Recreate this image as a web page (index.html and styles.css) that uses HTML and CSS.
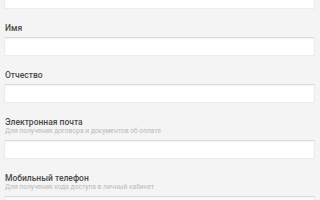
FILE: index.html
```html
<!DOCTYPE html>
<html lang="ru">
<head>
<meta charset="utf-8">
<link rel="stylesheet" href="styles.css">
</head>
<body>
<div class="form">
  <div class="field field-cut">
    <div class="input"></div>
  </div>
  <div class="field">
    <div class="label">Имя</div>
    <div class="input"></div>
  </div>
  <div class="field">
    <div class="label">Отчество</div>
    <div class="input"></div>
  </div>
  <div class="field">
    <div class="label">Электронная почта</div>
    <div class="hint">Для получения договора и документов об оплате</div>
    <div class="input"></div>
  </div>
  <div class="field">
    <div class="label">Мобильный телефон</div>
    <div class="hint">Для получения кода доступа в личный кабинет</div>
    <div class="input"><span class="placeholder">+7 (999) 999-99-99</span></div>
  </div>
</div>
</body>
</html>
```
FILE: styles.css
```css
html, body {
  margin: 0;
  padding: 0;
  background: #f4f4f4;
  font-family: Roboto, "Liberation Sans", Arial, sans-serif;
  overflow: hidden;
}
.form {
  display: flex;
  flex-direction: column;
  gap: 14px;
  padding: 0 5px 0 4px;
}
.field {
  display: flex;
  flex-direction: column;
}
.field-cut {
  margin-top: -14px;
}
.label {
  font-size: 8.5px;
  line-height: 10px;
  font-weight: 500;
  color: #4a4a4a;
  padding-left: 1px;
}
.hint {
  font-size: 6.7px;
  line-height: 8px;
  color: #bababa;
  padding-left: 1px;
  margin-bottom: 1px;
}
.input {
  height: 19px;
  margin-top: 4px;
  background: #fff;
  border: 1px solid #ececec;
  border-top-color: #dcdcdc;
  box-shadow: inset 0 1px 2px rgba(0,0,0,0.06);
  box-sizing: border-box;
  display: flex;
  align-items: flex-start;
  padding: 4px 0 0 9px;
}
.placeholder {
  font-size: 8px;
  line-height: 10px;
  color: #c8c8c8;
}
```
